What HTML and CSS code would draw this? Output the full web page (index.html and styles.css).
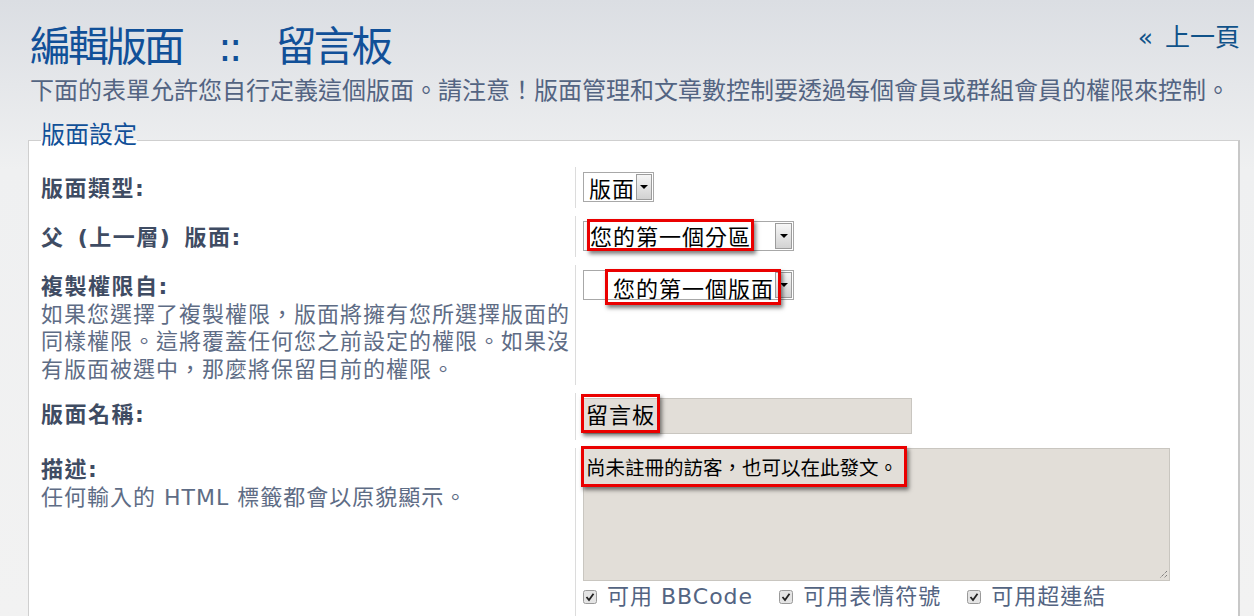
FILE: index.html
```html
<!DOCTYPE html>
<html lang="zh-Hant">
<head>
    <meta charset="UTF-8">
    <title>編輯版面 :: 留言板</title>
    <link rel="stylesheet" href="styles.css">
</head>
<body>
    <div class="main">
        <a class="back" href="#">« 上一頁</a>
        <h1>編輯版面 :: 留言板</h1>
        <p class="intro">下面的表單允許您自行定義這個版面。請注意！版面管理和文章數控制要透過每個會員或群組會員的權限來控制。</p>

        <fieldset>
            <legend>版面設定</legend>

            <dl>
                <dt><label>版面類型:</label></dt>
                <dd>
                    <div class="select type"><span class="val">版面</span><span class="arrow"></span></div>
                </dd>
            </dl>
            <dl>
                <dt><label>父 (上一層) 版面:</label></dt>
                <dd>
                    <div class="select wide"><span class="val"><span class="mark m-parent">您的第一個分區</span></span><span class="arrow"></span></div>
                </dd>
            </dl>
            <dl>
                <dt>
                    <label>複製權限自:</label>
                    <span class="explain">如果您選擇了複製權限，版面將擁有您所選擇版面的<br>同樣權限。這將覆蓋任何您之前設定的權限。如果沒<br>有版面被選中，那麼將保留目前的權限。</span>
                </dt>
                <dd>
                    <div class="select wide copy"><span class="val"><span class="mark m-copy">您的第一個版面</span></span><span class="arrow"></span></div>
                </dd>
            </dl>
            <dl>
                <dt><label>版面名稱:</label></dt>
                <dd>
                    <div class="field name"><span class="mark m-name">留言板</span></div>
                </dd>
            </dl>
            <dl>
                <dt>
                    <label>描述:</label>
                    <span class="explain">任何輸入的 HTML 標籤都會以原貌顯示。</span>
                </dt>
                <dd class="tight">
                    <div class="field desc">
                        <span class="mark m-desc">尚未註冊的訪客，也可以在此發文。</span>
                        <svg class="grip" width="10" height="10" viewBox="0 0 10 10"><path d="M9 2 L2 9 M9 6 L6 9" stroke="#555" stroke-width="1" stroke-dasharray="1 1"/></svg>
                    </div>
                    <div class="opts">
                        <label><svg class="cb" width="14" height="14" viewBox="0 0 14 14"><rect x="0.5" y="0.5" width="13" height="13" rx="2" fill="#e4e4e4" stroke="#9a9a9a"/><path d="M3.5 7 L6 10 L10.5 3.8" fill="none" stroke="#222" stroke-width="1.8"/></svg>可用 BBCode</label>
                        <label><svg class="cb" width="14" height="14" viewBox="0 0 14 14"><rect x="0.5" y="0.5" width="13" height="13" rx="2" fill="#e4e4e4" stroke="#9a9a9a"/><path d="M3.5 7 L6 10 L10.5 3.8" fill="none" stroke="#222" stroke-width="1.8"/></svg>可用表情符號</label>
                        <label><svg class="cb" width="14" height="14" viewBox="0 0 14 14"><rect x="0.5" y="0.5" width="13" height="13" rx="2" fill="#e4e4e4" stroke="#9a9a9a"/><path d="M3.5 7 L6 10 L10.5 3.8" fill="none" stroke="#222" stroke-width="1.8"/></svg>可用超連結</label>
                    </div>
                </dd>
            </dl>
        </fieldset>
    </div>
</body>
</html>
```

FILE: styles.css
```css
body { margin: 0; height: 616px; overflow: hidden; background: linear-gradient(#dbdee3 0, #eff0f1 170px, #f2f2f2 100%); font-family: "DejaVu Sans", "Noto Sans CJK TC", sans-serif; color: #536482; }
.main { padding: 22px 14px 0 28px; }

h1 { margin: 0 0 0 2px; font-size: 41px; line-height: 50px; font-weight: normal; color: #115098; letter-spacing: -3px; word-spacing: 26px; }
.back { float: right; margin-top: -1px; font-size: 25px; line-height: 34px; color: #105289; text-decoration: none; word-spacing: 4px; }
.intro { margin: 4px 0 0 2px; font-size: 24px; line-height: 30px; color: #536482; white-space: nowrap; }

fieldset { margin: 14px 0 0; padding: 6px 0 0 12px; background: #fff; border: 1px solid #cfcfcf; border-right: 2px solid #c8c8c8; border-bottom: 0; min-height: 600px; }
legend { padding: 0 0 11px; font-size: 24px; line-height: 30px; color: #115098; }

dl { display: grid; grid-template-columns: 534px 1fr; margin: 0 0 8px; }
dt { padding: 8px 0 2px; line-height: 27.5px; }
dt label { display: block; font-size: 22px; font-weight: bold; letter-spacing: 1.5px; word-spacing: 4px; color: #3f4c63; }
.explain { display: block; font-size: 22px; letter-spacing: 1px; white-space: nowrap; color: #5e6c85; }
dd { margin: 0; padding: 5px 0 6px 7px; border-left: 1px solid #dcdcdc; }
dd.tight { padding-top: 0; }

.select { display: flex; height: 30px; border: 1px solid #a8a8a8; background: #fff; box-sizing: border-box; }
.select.type { width: 71px; }
.select.wide { width: 211px; }
.val { flex: 1; display: flex; align-items: center; padding-left: 5px; font-family: "Noto Sans CJK TC", sans-serif; font-size: 22px; letter-spacing: 1px; color: #000; white-space: nowrap; }
.arrow { width: 15px; margin: 1px; border: 1px solid #9c9c9c; background: linear-gradient(#f6f6f6, #d2d2d2); display: flex; align-items: center; justify-content: center; }
.arrow::after { content: ""; border-left: 4px solid transparent; border-right: 4px solid transparent; border-top: 4px solid #000; }
.wide .val { padding-left: 3px; }
.copy .val { padding-left: 21px; }

.mark { display: inline-block; position: relative; z-index: 1; border: 3px solid #ea0000; box-shadow: 2px 3px 4px rgba(0, 0, 0, 0.5); color: #000; white-space: nowrap; }
.m-parent { line-height: 26px; margin: -2px 0 0; padding: 0; }
.m-copy { line-height: 30px; margin: 3px -9px 0 0; padding: 0 4px 0 5px; }

.field { position: relative; background: #e2ded8; border: 1px solid #c9c6c0; box-sizing: border-box; font-family: "Noto Sans CJK TC", sans-serif; color: #000; }
.field.name { width: 329px; height: 36px; }
.field.desc { width: 587px; height: 133px; }
.m-name { font-size: 22px; line-height: 33px; margin: -5px 0 0 -3px; padding: 0 2px; letter-spacing: 1px; }
.m-desc { font-size: 19.5px; line-height: 29px; margin: -3px 0 0 -3px; padding: 3px 6px 3px 2px; }
.grip { position: absolute; right: 1px; bottom: 1px; }

.opts { display: flex; gap: 26px; margin-top: 2px; font-size: 22px; line-height: 28px; letter-spacing: 1px; color: #536482; }
.opts label { display: flex; align-items: center; }
.cb { margin-right: 10px; }
```
